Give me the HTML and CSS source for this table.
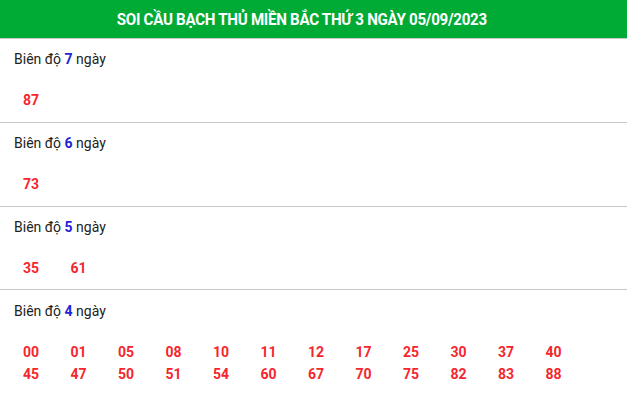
FILE: index.html
```html
<!DOCTYPE html>
<html lang="vi">
<head>
<meta charset="utf-8">
<link rel="stylesheet" href="styles.css">
</head>
<body>
<div class="box">
  <div class="head"><h1 class="title">SOI CẦU BẠCH THỦ MIỀN BẮC THỨ 3 NGÀY 05/09/2023</h1></div>
  <div class="sec">
    <div class="label">Biên độ <b class="n">7</b> ngày</div>
    <div class="nums"><span>87</span></div>
  </div>
  <div class="sec">
    <div class="label">Biên độ <b class="n">6</b> ngày</div>
    <div class="nums"><span>73</span></div>
  </div>
  <div class="sec sec-tight">
    <div class="label">Biên độ <b class="n">5</b> ngày</div>
    <div class="nums"><span>35</span><span>61</span></div>
  </div>
  <div class="sec sec-last">
    <div class="label">Biên độ <b class="n">4</b> ngày</div>
    <div class="nums">
      <span>00</span><span>01</span><span>05</span><span>08</span><span>10</span><span>11</span><span>12</span><span>17</span><span>25</span><span>30</span><span>37</span><span>40</span>
      <span>45</span><span>47</span><span>50</span><span>51</span><span>54</span><span>60</span><span>67</span><span>70</span><span>75</span><span>82</span><span>83</span><span>88</span>
    </div>
  </div>
</div>
</body>
</html>
```
FILE: styles.css
```css
html, body { margin: 0; padding: 0; background: #fff; }
body { font-family: Roboto, "Noto Sans", Arial, sans-serif; color: #222; }
.head {
  height: 38px;
  background: #00ab35;
  display: flex;
  align-items: center;
  justify-content: center;
  padding-right: 24px;
}
.title {
  margin: 0;
  color: #fff;
  font-size: 16px;
  font-weight: 700;
  letter-spacing: -0.3px;
  transform: scaleX(0.945);
  white-space: nowrap;
}
.sec {
  border-top: 1px solid #c8c8c8;
  padding: 10px 0 11px 14px;
}
.sec:first-of-type { border-top-color: transparent; }
.sec-tight { padding-bottom: 10px; }
.sec-last { padding-top: 11px; }
.label { font-size: 14px; line-height: 20px; }
.n { color: #1f24d8; font-weight: 700; }
.nums {
  margin-top: 20px;
  padding-left: 9px;
  display: grid;
  grid-template-columns: repeat(12, 47.5px);
  font-size: 14px;
  line-height: 22px;
  font-weight: 700;
  color: #f5262d;
}
```
